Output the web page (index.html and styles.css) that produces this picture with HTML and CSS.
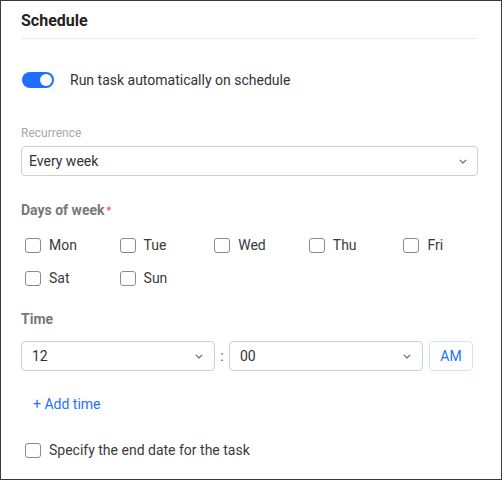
FILE: index.html
```html
<!DOCTYPE html>
<html>
<head>
<meta charset="utf-8">
<link rel="stylesheet" href="styles.css">
</head>
<body>
<div class="frame">
  <div class="header">Schedule</div>

  <div class="toggle-row">
    <span class="toggle"><span class="knob"></span></span>
    <span class="toggle-text">Run task automatically on schedule</span>
  </div>

  <div class="field-label">Recurrence</div>
  <div class="select wide">
    <span class="val">Every week</span>
    <svg class="chev" width="8" height="5" viewBox="0 0 8 5"><path d="M0.8 0.8 L4 4 L7.2 0.8" fill="none" stroke="#666" stroke-width="1.1"/></svg>
  </div>

  <div class="section-label days">Days of week<span class="req">*</span></div>
  <div class="days-grid">
    <label class="cb"><span class="box"></span>Mon</label>
    <label class="cb"><span class="box"></span>Tue</label>
    <label class="cb"><span class="box"></span>Wed</label>
    <label class="cb"><span class="box"></span>Thu</label>
    <label class="cb"><span class="box"></span>Fri</label>
    <label class="cb"><span class="box"></span>Sat</label>
    <label class="cb"><span class="box"></span>Sun</label>
  </div>

  <div class="section-label time">Time</div>
  <div class="time-row">
    <div class="select half">
      <span class="val">12</span>
      <svg class="chev" width="8" height="5" viewBox="0 0 8 5"><path d="M0.8 0.8 L4 4 L7.2 0.8" fill="none" stroke="#666" stroke-width="1.1"/></svg>
    </div>
    <span class="colon">:</span>
    <div class="select half">
      <span class="val">00</span>
      <svg class="chev" width="8" height="5" viewBox="0 0 8 5"><path d="M0.8 0.8 L4 4 L7.2 0.8" fill="none" stroke="#666" stroke-width="1.1"/></svg>
    </div>
    <div class="ampm">AM</div>
  </div>

  <div class="add-time">+ Add time</div>

  <label class="cb end"><span class="box"></span>Specify the end date for the task</label>
</div>
</body>
</html>
```

FILE: styles.css
```css
html, body {
  margin: 0;
  padding: 0;
  background: #fff;
}
body {
  font-family: Roboto, "Liberation Sans", Arial, sans-serif;
  color: #333;
}
.frame {
  box-sizing: border-box;
  width: 502px;
  height: 480px;
  border: 1px solid #3a3a3a;
  padding: 0 23px 0 20px;
  overflow: hidden;
}
.header {
  padding-top: 10px;
  padding-bottom: 7px;
  font-size: 16px;
  line-height: 20px;
  font-weight: 700;
  color: #222;
  border-bottom: 1px solid #ececec;
}
.toggle-row {
  margin-top: 31px;
  display: flex;
  align-items: center;
  height: 20px;
}
.toggle {
  box-sizing: border-box;
  width: 32px;
  height: 16px;
  border-radius: 8px;
  background: #1f6fff;
  margin-left: 1px;
  display: flex;
  align-items: center;
  justify-content: flex-end;
  padding-right: 2px;
}
.knob {
  width: 12px;
  height: 12px;
  border-radius: 50%;
  background: #fff;
}
.toggle-text {
  margin-left: 16px;
  font-size: 14px;
  line-height: 20px;
  color: #333;
}
.field-label {
  margin-top: 35px;
  font-size: 12px;
  line-height: 16px;
  color: #a8a8a8;
}
.select {
  box-sizing: border-box;
  height: 30px;
  border: 1px solid #cfcfcf;
  border-radius: 4px;
  display: flex;
  align-items: center;
  justify-content: space-between;
  font-size: 14px;
  color: #333;
}
.select.wide {
  margin-top: 5px;
  padding: 0 10px 0 7px;
}
.select.half {
  width: 194px;
  padding: 0 11px 0 10px;
}
.chev {
  display: block;
}
.section-label {
  font-size: 14px;
  line-height: 18px;
  font-weight: 700;
  color: #777;
}
.section-label.days {
  margin-top: 25px;
}
.req {
  color: #f04b4b;
  font-size: 10px;
  margin-left: 2px;
  vertical-align: 1px;
}
.days-grid {
  margin-top: 15px;
  padding-left: 4px;
  display: grid;
  grid-template-columns: repeat(5, 94.6px);
  row-gap: 13px;
}
.cb {
  display: flex;
  align-items: center;
  height: 20px;
  font-size: 14px;
  color: #3a3a3a;
}
.box {
  box-sizing: border-box;
  width: 16px;
  height: 15px;
  border: 1px solid #8a8a8a;
  border-radius: 3px;
  margin-right: 8px;
  flex: none;
}
.section-label.time {
  margin-top: 22px;
}
.time-row {
  margin-top: 13px;
  display: flex;
  align-items: center;
}
.colon {
  width: 14px;
  text-align: center;
  font-size: 14px;
  color: #555;
}
.ampm {
  box-sizing: border-box;
  margin-left: 6px;
  width: 44px;
  height: 30px;
  border: 1px solid #cfe0fb;
  border-radius: 4px;
  display: flex;
  align-items: center;
  justify-content: center;
  font-size: 14px;
  color: #1f6fff;
}
.add-time {
  margin-top: 23px;
  padding-left: 12px;
  font-size: 14px;
  line-height: 20px;
  color: #1f6fff;
}
.cb.end {
  margin-top: 26px;
  padding-left: 4px;
}
```
